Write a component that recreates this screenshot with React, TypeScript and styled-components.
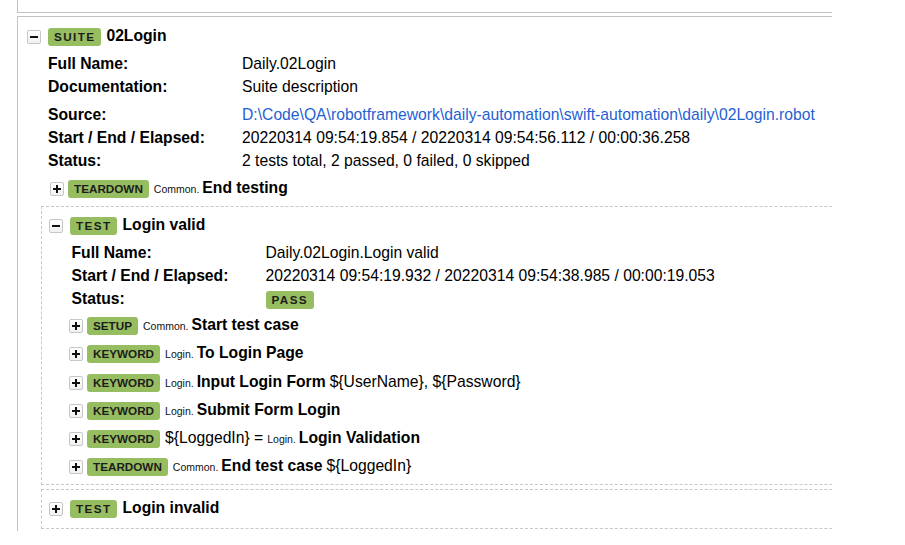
import React from 'react';
import styled, { createGlobalStyle } from 'styled-components';

type KwType = 'SETUP' | 'KEYWORD' | 'TEARDOWN';

interface Kw {
    type: KwType;
    assign?: string;
    parent: string;
    name: string;
    args?: string;
}

const suiteMeta = [
    { label: 'Full Name:', value: 'Daily.02Login' },
    { label: 'Documentation:', value: 'Suite description', tall: true },
    { label: 'Source:', value: 'D:\\Code\\QA\\robotframework\\daily-automation\\swift-automation\\daily\\02Login.robot', link: true },
    { label: 'Start / End / Elapsed:', value: '20220314 09:54:19.854 / 20220314 09:54:56.112 / 00:00:36.258' },
    { label: 'Status:', value: '2 tests total, 2 passed, 0 failed, 0 skipped' },
];

const testMeta = [
    { label: 'Full Name:', value: 'Daily.02Login.Login valid' },
    { label: 'Start / End / Elapsed:', value: '20220314 09:54:19.932 / 20220314 09:54:38.985 / 00:00:19.053' },
];

const testKeywords: Kw[] = [
    { type: 'SETUP', parent: 'Common', name: 'Start test case' },
    { type: 'KEYWORD', parent: 'Login', name: 'To Login Page' },
    { type: 'KEYWORD', parent: 'Login', name: 'Input Login Form', args: '${UserName}, ${Password}' },
    { type: 'KEYWORD', parent: 'Login', name: 'Submit Form Login' },
    { type: 'KEYWORD', assign: '${LoggedIn} =', parent: 'Login', name: 'Login Validation' },
    { type: 'TEARDOWN', parent: 'Common', name: 'End test case', args: '${LoggedIn}' },
];

function Toggle({ open }: { open: boolean }) {
    return (
        <ToggleBox>
            <svg width="12" height="12" viewBox="0 0 12 12">
                <rect x="2" y="5" width="8" height="2" fill="#111" />
                {!open && <rect x="5" y="2" width="2" height="8" fill="#111" />}
            </svg>
        </ToggleBox>
    );
}

function KeywordLine({ kw }: { kw: Kw }) {
    return (
        <KwRow>
            <Toggle open={false} />
            <Title>
                <Badge>{kw.type}</Badge>
                {kw.assign && <Plain $after>{kw.assign}</Plain>}
                <Parent>{kw.parent}.</Parent>
                <Name>{kw.name}</Name>
                {kw.args && <Plain $before>{kw.args}</Plain>}
            </Title>
        </KwRow>
    );
}

export default function App() {
    return (
        <>
            <GlobalStyle />
            <Clip>
                <PrevEdge />
                <Suite>
                    <Header>
                        <Toggle open />
                        <Title>
                            <Badge $spaced>SUITE</Badge>
                            <Name>02Login</Name>
                        </Title>
                    </Header>
                    <Body $indent={14}>
                        <Meta $pad={7}>
                            {suiteMeta.map((m) => (
                                <React.Fragment key={m.label}>
                                    <Label>{m.label}</Label>
                                    <Value $tall={m.tall}>
                                        {m.link ? <Link href="#">{m.value}</Link> : m.value}
                                    </Value>
                                </React.Fragment>
                            ))}
                        </Meta>
                        <KwList>
                            <KeywordLine kw={{ type: 'TEARDOWN', parent: 'Common', name: 'End testing' }} />
                        </KwList>

                        <Test>
                            <Header>
                                <Toggle open />
                                <Title>
                                    <Badge $spaced>TEST</Badge>
                                    <Name>Login valid</Name>
                                </Title>
                            </Header>
                            <Body $indent={11}>
                                <Meta $pad={11.5}>
                                    {testMeta.map((m) => (
                                        <React.Fragment key={m.label}>
                                            <Label>{m.label}</Label>
                                            <Value>{m.value}</Value>
                                        </React.Fragment>
                                    ))}
                                    <Label>Status:</Label>
                                    <Value><Badge $spaced>PASS</Badge></Value>
                                </Meta>
                                <KwList>
                                    {testKeywords.map((kw, i) => (
                                        <KeywordLine key={i} kw={kw} />
                                    ))}
                                </KwList>
                            </Body>
                        </Test>

                        <Test $collapsed>
                            <Header>
                                <Toggle open={false} />
                                <Title>
                                    <Badge $spaced>TEST</Badge>
                                    <Name>Login invalid</Name>
                                </Title>
                            </Header>
                        </Test>
                    </Body>
                </Suite>
            </Clip>
        </>
    );
}

const GlobalStyle = createGlobalStyle`
    html, body {
        margin: 0;
        padding: 0;
        background: #fff;
    }
    body {
        font-family: "Liberation Sans", Arial, Helvetica, sans-serif;
        font-size: 15.7px;
        color: #000;
    }
`;

const Clip = styled.div`
    width: 832px;
    height: 531px;
    overflow: hidden;
`;

const PrevEdge = styled.div`
    margin-left: 17px;
    height: 12px;
    border-left: 1px solid #c2c2c2;
    border-bottom: 1px solid #c2c2c2;
`;

const Suite = styled.section`
    margin: 3px 0 0 17px;
    width: 1000px;
    border: 1px solid #c2c2c2;
    padding: 11px 0 20px 9px;
`;

const Header = styled.div`
    display: flex;
    align-items: center;
    gap: 7px;
    height: 18px;
`;

const KwRow = styled.div`
    display: flex;
    align-items: center;
    gap: 4px;
    height: 18px;
    padding-left: 9px;
`;

const ToggleBox = styled.span`
    flex: none;
    box-sizing: border-box;
    width: 14px;
    height: 14px;
    display: flex;
    align-items: center;
    justify-content: center;
    border: 1px solid #c6c6c6;
    border-radius: 2px;
    background: linear-gradient(#ffffff, #f1f1f1);
`;

const Title = styled.div`
    display: flex;
    align-items: baseline;
    white-space: nowrap;
`;

const Badge = styled.span<{ $spaced?: boolean }>`
    display: inline-block;
    height: 18px;
    line-height: 18px;
    padding: 0 6px;
    margin-right: 5px;
    font-size: 11.7px;
    font-weight: bold;
    letter-spacing: ${(p) => (p.$spaced ? '1.4px' : '0')};
    color: #1c1c1c;
    background: #97bd61;
    border-radius: 3px;
`;

const Name = styled.span`
    font-weight: bold;
    line-height: 16px;
`;

const Parent = styled.span`
    font-size: 10.5px;
    margin-right: 3px;
    color: #111;
`;

const Plain = styled.span<{ $before?: boolean; $after?: boolean }>`
    line-height: 16px;
    margin-left: ${(p) => (p.$before ? '4px' : '0')};
    margin-right: ${(p) => (p.$after ? '4px' : '0')};
`;

const Body = styled.div<{ $indent: number }>`
    margin-left: ${(p) => p.$indent}px;
    display: flex;
    flex-direction: column;
`;

const Meta = styled.div<{ $pad: number }>`
    display: grid;
    grid-template-columns: 194px 1fr;
    margin-top: 6px;
    padding-left: ${(p) => p.$pad}px;
    line-height: 23px;
`;

const Label = styled.div`
    font-weight: bold;
    white-space: nowrap;
`;

const Value = styled.div<{ $tall?: boolean }>`
    white-space: nowrap;
    padding-bottom: ${(p) => (p.$tall ? '5px' : '0')};
`;

const Link = styled.a`
    color: #1f5fd3;
    text-decoration: none;
`;

const KwList = styled.div`
    display: flex;
    flex-direction: column;
    gap: 10.3px;
    margin-top: 7.5px;
`;

const Test = styled.div<{ $collapsed?: boolean }>`
    border: 1px dashed #c8c8c8;
    padding: 10px 0 ${(p) => (p.$collapsed ? '10px' : '8px')} 7px;
    margin-top: 8px;

    & + & {
        margin-top: 4px;
    }
`;
